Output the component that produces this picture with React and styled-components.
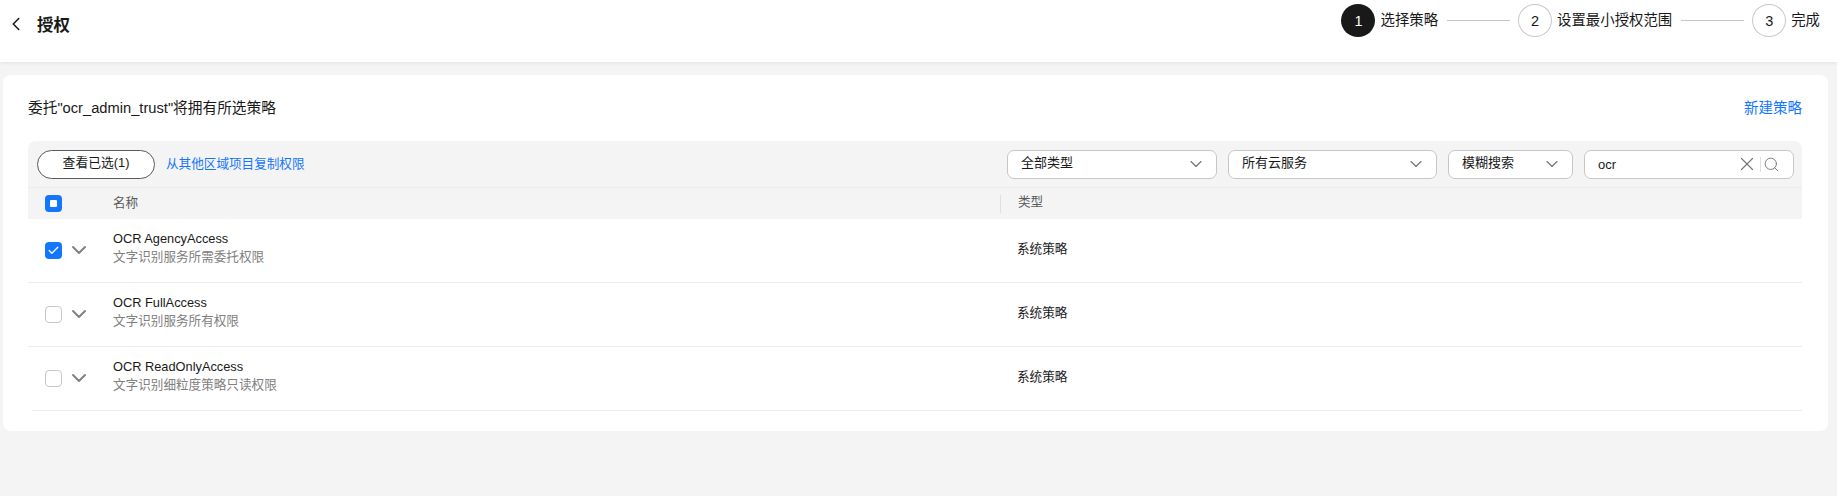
import { Fragment } from 'react';
import styled, { createGlobalStyle } from 'styled-components';
import { Check, ChevronDown, ChevronLeft, Search, X } from 'lucide-react';

const GlobalStyle = createGlobalStyle`
  html, body {
    margin: 0;
    padding: 0;
    height: 100%;
    background: #f4f4f4;
    font-family: 'Liberation Sans', 'Noto Sans CJK SC', sans-serif;
    color: #191919;
  }
`;

const Page = styled.div`
  min-height: 496px;
  background: #f4f4f4;
  overflow: hidden;
`;

const Header = styled.header`
  height: 62px;
  background: #fff;
  box-shadow: 0 1px 4px rgba(0, 0, 0, 0.08);
  display: flex;
  justify-content: space-between;
  padding: 4px 17px 0 12px;
  box-sizing: border-box;
`;

const TitleBox = styled.div`
  display: flex;
  align-items: center;
  height: 40px;
  gap: 10px;
  svg {
    margin-left: -7px;
  }
`;

const Title = styled.h1`
  margin: 0;
  font-size: 16.5px;
  font-weight: 700;
`;

const Stepper = styled.div`
  display: flex;
  align-items: flex-start;
`;

const StepCircle = styled.span`
  width: 34px;
  height: 33px;
  box-sizing: border-box;
  border-radius: 50%;
  display: flex;
  align-items: center;
  justify-content: center;
  font-size: 14.5px;
  background: ${(p) => (p.$active ? '#191919' : '#fff')};
  color: ${(p) => (p.$active ? '#fff' : '#191919')};
  border: ${(p) => (p.$active ? 'none' : '1px solid #c7c7c7')};
`;

const StepLabel = styled.span`
  margin-left: 5px;
  line-height: 33px;
  font-size: 14.4px;
  white-space: nowrap;
`;

const StepLine = styled.span`
  width: 63px;
  height: 1px;
  margin: 16px 8px 0 9px;
  background: #c7c7c7;
`;

const Card = styled.main`
  margin: 13px 9px 0 3px;
  height: 356px;
  background: #fff;
  border-radius: 8px;
  padding: 0 26px 0 25px;
  box-sizing: border-box;
`;

const CardTop = styled.div`
  height: 66px;
  box-sizing: border-box;
  padding-bottom: 3px;
  display: flex;
  justify-content: space-between;
  align-items: center;
  font-size: 14.7px;
`;

const LinkText = styled.a`
  color: #1476ff;
  font-size: 14.5px;
  white-space: nowrap;
`;

const CopyLink = styled(LinkText)`
  font-size: 12.6px;
  margin-top: -4px;
`;

const Toolbar = styled.div`
  height: 46px;
  background: #f4f4f4;
  border-radius: 8px 8px 0 0;
  border-bottom: 1px solid #ececec;
  display: flex;
  align-items: center;
  padding: 0 8px 0 9px;
  gap: 11px;
`;

const PillButton = styled.button`
  width: 118px;
  height: 29px;
  border: 1px solid #595959;
  border-radius: 15px;
  background: #fff;
  font: inherit;
  font-size: 12.8px;
  color: #191919;
  padding: 0 0 5px;
`;

const Filters = styled.div`
  margin-left: auto;
  display: flex;
  gap: 11px;
`;

const Field = styled.div`
  width: ${(p) => p.$width}px;
  height: 29px;
  box-sizing: border-box;
  background: #fff;
  border: 1px solid #c7c7c7;
  border-radius: 7px;
  display: flex;
  align-items: center;
  justify-content: space-between;
  padding: 0 ${(p) => p.$right || 10}px 0 13px;
  font-size: 13px;
  svg {
    color: #757575;
    flex: none;
  }
`;

const FieldLabel = styled.span`
  margin-top: -6px;
`;

const FieldIcons = styled.div`
  display: flex;
  align-items: center;
  gap: 2px;
`;

const IconDivider = styled.span`
  width: 1px;
  height: 15px;
  background: #dfdfdf;
`;

const HeadRow = styled.div`
  display: grid;
  grid-template-columns: 85px 887px 1fr;
  align-items: center;
  height: 31px;
  background: #f4f4f4;
  font-size: 12.6px;
  color: #595959;
`;

const HeadLabel = styled.span`
  margin-top: -5px;
`;

const TypeHead = styled.div`
  border-left: 1px solid #dfdfdf;
  height: 18px;
  line-height: 14px;
  padding-left: 17px;
`;

const CheckCell = styled.div`
  display: flex;
  align-items: center;
  padding-left: 17px;
  gap: 5px;
  > svg {
    color: #808080;
    margin-top: -2px;
  }
`;

const Checkbox = styled.span`
  width: 17px;
  height: 17px;
  box-sizing: border-box;
  border-radius: 4px;
  display: flex;
  align-items: center;
  justify-content: center;
  flex: none;
  background: ${(p) => (p.$on ? '#1476ff' : '#fff')};
  border: ${(p) => (p.$on ? 'none' : '1px solid #c7c7c7')};
`;

const HalfMark = styled.span`
  width: 7px;
  height: 7px;
  background: #fff;
  border-radius: 1px;
`;

const Row = styled.div`
  display: grid;
  grid-template-columns: 85px 904px 1fr;
  align-items: center;
  height: 64px;
  box-sizing: border-box;
  border-bottom: 1px solid #ececec;
  font-size: 12.6px;
  &:last-child {
    margin-left: 4px;
    grid-template-columns: 81px 904px 1fr;
    > div:first-child {
      padding-left: 13px;
    }
  }
`;

const NameCell = styled.div`
  display: flex;
  flex-direction: column;
  gap: 2px;
  line-height: 17px;
  margin-top: -5px;
`;

const Name = styled.span`
  font-size: 12.8px;
`;

const Sub = styled.span`
  color: #808080;
`;

const TypeCell = styled.span`
  padding-bottom: 6px;
`;

const policies = [
  { name: 'OCR AgencyAccess', desc: '文字识别服务所需委托权限', on: true },
  { name: 'OCR FullAccess', desc: '文字识别服务所有权限', on: false },
  { name: 'OCR ReadOnlyAccess', desc: '文字识别细粒度策略只读权限', on: false },
];

const steps = ['选择策略', '设置最小授权范围', '完成'];

function App() {
  return (
    <Page>
      <GlobalStyle />
      <Header>
        <TitleBox>
          <ChevronLeft size={22} strokeWidth={1.7} />
          <Title>授权</Title>
        </TitleBox>
        <Stepper>
          {steps.map((label, i) => (
            <Fragment key={label}>
              {i > 0 && <StepLine />}
              <StepCircle $active={i === 0}>{i + 1}</StepCircle>
              <StepLabel>{label}</StepLabel>
            </Fragment>
          ))}
        </Stepper>
      </Header>
      <Card>
        <CardTop>
          <span>委托"ocr_admin_trust"将拥有所选策略</span>
          <LinkText>新建策略</LinkText>
        </CardTop>
        <Toolbar>
          <PillButton>查看已选(1)</PillButton>
          <CopyLink>从其他区域项目复制权限</CopyLink>
          <Filters>
            <Field $width={210}>
              <FieldLabel>全部类型</FieldLabel>
              <ChevronDown size={20} strokeWidth={1.4} />
            </Field>
            <Field $width={209}>
              <FieldLabel>所有云服务</FieldLabel>
              <ChevronDown size={20} strokeWidth={1.4} />
            </Field>
            <Field $width={125}>
              <FieldLabel>模糊搜索</FieldLabel>
              <ChevronDown size={20} strokeWidth={1.4} />
            </Field>
            <Field $width={210} $right={13}>
              ocr
              <FieldIcons>
                <X size={22} strokeWidth={1.2} />
                <IconDivider />
                <Search size={17} strokeWidth={1.3} />
              </FieldIcons>
            </Field>
          </Filters>
        </Toolbar>
        <HeadRow>
          <CheckCell>
            <Checkbox $on>
              <HalfMark />
            </Checkbox>
          </CheckCell>
          <HeadLabel>名称</HeadLabel>
          <TypeHead>类型</TypeHead>
        </HeadRow>
        {policies.map((p) => (
          <Row key={p.name}>
            <CheckCell>
              <Checkbox $on={p.on}>
                {p.on && <Check size={13} color="#fff" strokeWidth={2.4} />}
              </Checkbox>
              <ChevronDown size={24} strokeWidth={2} />
            </CheckCell>
            <NameCell>
              <Name>{p.name}</Name>
              <Sub>{p.desc}</Sub>
            </NameCell>
            <TypeCell>系统策略</TypeCell>
          </Row>
        ))}
      </Card>
    </Page>
  );
}

export default App;
